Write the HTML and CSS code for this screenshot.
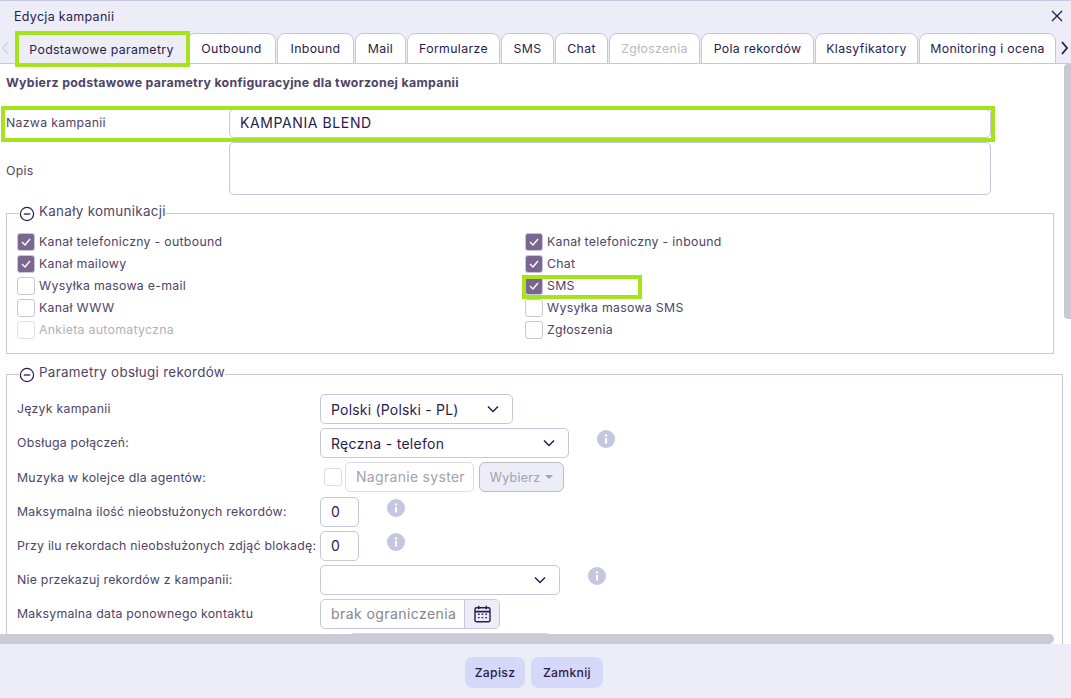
FILE: index.html
```html
<!DOCTYPE html>
<html lang="pl">
<head>
<meta charset="utf-8">
<title>Edycja kampanii</title>
<link rel="stylesheet" href="styles.css">
</head>
<body>
<div class="modal">
  <header class="modal-head">
    <span class="modal-title">Edycja kampanii</span>
    <svg class="close" width="12" height="12" viewBox="0 0 12 12"><path d="M1 1l10 10M11 1L1 11" fill="none" stroke="#2a1b4d" stroke-width="1.3"/></svg>
  </header>
  <nav class="tabbar">
    <svg class="tab-arrow" width="9" height="14" viewBox="0 0 9 14"><path d="M7 1L2 7l5 6" fill="none" stroke="#d3d3dc" stroke-width="1.5"/></svg>
    <div class="tabs">
      <div class="tab tab-active">Podstawowe parametry</div>
      <div class="tab">Outbound</div>
      <div class="tab">Inbound</div>
      <div class="tab">Mail</div>
      <div class="tab">Formularze</div>
      <div class="tab">SMS</div>
      <div class="tab">Chat</div>
      <div class="tab tab-disabled">Zgłoszenia</div>
      <div class="tab">Pola rekordów</div>
      <div class="tab">Klasyfikatory</div>
      <div class="tab">Monitoring i ocena</div>
    </div>
    <svg class="tab-arrow tab-arrow-next" width="9" height="14" viewBox="0 0 9 14"><path d="M2 1l5 6-5 6" fill="none" stroke="#2a1b4d" stroke-width="1.8"/></svg>
  </nav>
  <main class="content">
    <h1 class="intro">Wybierz podstawowe parametry konfiguracyjne dla tworzonej kampanii</h1>
    <div class="name-row name-row-marked">
      <div class="name-label">Nazwa kampanii</div>
      <div class="field name-input">KAMPANIA BLEND</div>
    </div>
    <div class="name-row desc-row">
      <div class="name-label desc-label">Opis</div>
      <div class="field desc-input"></div>
    </div>

    <fieldset class="group group-channels">
      <legend class="legend">
        <svg width="16" height="16" viewBox="0 0 16 16"><circle cx="8" cy="8" r="6.6" fill="none" stroke="#2a1b4d" stroke-width="1.2"/><path d="M4.8 8h6.4" stroke="#2a1b4d" stroke-width="1.3"/></svg>
        <span class="legend-text">Kanały komunikacji</span>
      </legend>
      <div class="checks">
        <div class="check"><span class="box box-on"><svg width="12" height="10" viewBox="0 0 12 10"><path d="M2 5l3 3 5-6" fill="none" stroke="#fff" stroke-width="1.4"/></svg></span>Kanał telefoniczny - outbound</div>
        <div class="check"><span class="box box-on"><svg width="12" height="10" viewBox="0 0 12 10"><path d="M2 5l3 3 5-6" fill="none" stroke="#fff" stroke-width="1.4"/></svg></span>Kanał mailowy</div>
        <div class="check"><span class="box"></span>Wysyłka masowa e-mail</div>
        <div class="check"><span class="box"></span>Kanał WWW</div>
        <div class="check check-disabled"><span class="box"></span>Ankieta automatyczna</div>
        <div class="check"><span class="box box-on"><svg width="12" height="10" viewBox="0 0 12 10"><path d="M2 5l3 3 5-6" fill="none" stroke="#fff" stroke-width="1.4"/></svg></span>Kanał telefoniczny - inbound</div>
        <div class="check"><span class="box box-on"><svg width="12" height="10" viewBox="0 0 12 10"><path d="M2 5l3 3 5-6" fill="none" stroke="#fff" stroke-width="1.4"/></svg></span>Chat</div>
        <div class="check check-marked"><span class="box box-on"><svg width="12" height="10" viewBox="0 0 12 10"><path d="M2 5l3 3 5-6" fill="none" stroke="#fff" stroke-width="1.4"/></svg></span>SMS</div>
        <div class="check"><span class="box"></span>Wysyłka masowa SMS</div>
        <div class="check"><span class="box"></span>Zgłoszenia</div>
      </div>
    </fieldset>

    <fieldset class="group group-records">
      <legend class="legend">
        <svg width="16" height="16" viewBox="0 0 16 16"><circle cx="8" cy="8" r="6.6" fill="none" stroke="#2a1b4d" stroke-width="1.2"/><path d="M4.8 8h6.4" stroke="#2a1b4d" stroke-width="1.3"/></svg>
        <span class="legend-text">Parametry obsługi rekordów</span>
      </legend>
      <div class="form">
        <div class="form-label">Język kampanii</div>
        <div class="controls">
          <div class="field select select-lang">Polski (Polski - PL)<svg width="12" height="8" viewBox="0 0 12 8"><path d="M1 1.5l5 5 5-5" fill="none" stroke="#2a1b4d" stroke-width="1.5"/></svg></div>
        </div>
        <div class="form-label">Obsługa połączeń:</div>
        <div class="controls">
          <div class="field select select-calls">Ręczna - telefon<svg width="12" height="8" viewBox="0 0 12 8"><path d="M1 1.5l5 5 5-5" fill="none" stroke="#2a1b4d" stroke-width="1.5"/></svg></div>
          <svg class="info info-calls" width="18" height="18" viewBox="0 0 18 18"><circle cx="9" cy="9" r="9" fill="#c5c6e0"/><circle cx="9" cy="5.4" r="1.2" fill="#fff"/><path d="M9 8v5.5" stroke="#fff" stroke-width="2"/></svg>
        </div>
        <div class="form-label">Muzyka w kolejce dla agentów:</div>
        <div class="controls controls-music">
          <span class="box music-box"></span>
          <div class="field music-input">Nagranie syster</div>
          <div class="pick">Wybierz<span class="caret"></span></div>
        </div>
        <div class="form-label">Maksymalna ilość nieobsłużonych rekordów:</div>
        <div class="controls">
          <div class="field number">0</div>
          <svg class="info info-number" width="18" height="18" viewBox="0 0 18 18"><circle cx="9" cy="9" r="9" fill="#c5c6e0"/><circle cx="9" cy="5.4" r="1.2" fill="#fff"/><path d="M9 8v5.5" stroke="#fff" stroke-width="2"/></svg>
        </div>
        <div class="form-label">Przy ilu rekordach nieobsłużonych zdjąć blokadę:</div>
        <div class="controls">
          <div class="field number">0</div>
          <svg class="info info-number" width="18" height="18" viewBox="0 0 18 18"><circle cx="9" cy="9" r="9" fill="#c5c6e0"/><circle cx="9" cy="5.4" r="1.2" fill="#fff"/><path d="M9 8v5.5" stroke="#fff" stroke-width="2"/></svg>
        </div>
        <div class="form-label">Nie przekazuj rekordów z kampanii:</div>
        <div class="controls">
          <div class="field select select-skip"><svg width="12" height="8" viewBox="0 0 12 8"><path d="M1 1.5l5 5 5-5" fill="none" stroke="#2a1b4d" stroke-width="1.5"/></svg></div>
          <svg class="info info-skip" width="18" height="18" viewBox="0 0 18 18"><circle cx="9" cy="9" r="9" fill="#c5c6e0"/><circle cx="9" cy="5.4" r="1.2" fill="#fff"/><path d="M9 8v5.5" stroke="#fff" stroke-width="2"/></svg>
        </div>
        <div class="form-label">Maksymalna data ponownego kontaktu</div>
        <div class="controls">
          <div class="date">
            <div class="date-text">brak ograniczenia</div>
            <div class="date-btn">
              <svg width="17" height="18" viewBox="0 0 17 18"><rect x="1" y="2.8" width="15" height="14" rx="1.6" fill="none" stroke="#2a1b4d" stroke-width="1.4"/><path d="M1 6.6h15" stroke="#2a1b4d" stroke-width="1.6"/><path d="M4.7 .8v3.4M12.3 .8v3.4" stroke="#2a1b4d" stroke-width="1.4"/><path d="M4 9.3h1.6M7.7 9.3h1.6M11.4 9.3H13M4 12.6h1.6M7.7 12.6h1.6M11.4 12.6H13" stroke="#2a1b4d" stroke-width="1.4"/></svg>
            </div>
          </div>
        </div>
        <div class="form-label"></div>
        <div class="controls"><div class="peek"></div></div>
      </div>
    </fieldset>
    <div class="scroll-v"></div>
    <div class="scroll-h"></div>
  </main>
  <footer class="modal-foot">
    <div class="btn btn-save">Zapisz</div>
    <div class="btn btn-close">Zamknij</div>
  </footer>
</div>
</body>
</html>
```
FILE: styles.css
```css
* { box-sizing: border-box; }
html, body { margin: 0; height: 100%; overflow: hidden; }
body {
  font-family: Inter, "Noto Sans", "Liberation Sans", sans-serif;
  font-size: 12.3px;
  letter-spacing: .3px;
  color: #4e4468;
  background: #fff;
}
.modal {
  display: flex;
  flex-direction: column;
  height: 698px;
  width: 1071px;
  background: #ecedf6;
  border-top: 1px solid #c5c6e0;
}
.modal-head {
  display: flex;
  justify-content: space-between;
  align-items: center;
  height: 31px;
  padding: 0 8px 1px 14px;
  flex: none;
}
.modal-title { font-size: 12.5px; color: #2a1b4d; }
.tabbar {
  display: flex;
  align-items: flex-end;
  height: 32px;
  flex: none;
  position: relative;
  background: #ecedf6;
  border-bottom: 1px solid #c5c6e0;
}
.tab-arrow { position: absolute; left: 1px; top: 9px; }
.tab-arrow-next { left: auto; right: 2px; }
.tabs {
  display: grid;
  grid-template-columns: 168px 90px 78px 52px 94px 54px 54px 92px 114px 104px 138px;
  margin: 0 0 -1px 19px;
  height: 31px;
}
.tab {
  display: flex;
  align-items: center;
  justify-content: center;
  background: #fff;
  border: 1px solid #c5c6e0;
  border-radius: 8px 8px 0 0;
  font-size: 12.3px;
  letter-spacing: .35px;
  color: #2a1b4d;
  margin-right: 1px;
  white-space: nowrap;
}
.tab-active {
  background: #ecedf6;
  border: 0;
  border-radius: 0;
  margin: 2px 1px 1px 0;
  padding-right: 2px;
  outline: 4px solid #a5e41d;
  position: relative;
  z-index: 2;
}
.tab-disabled { color: #b9b9c4; }
.content {
  position: relative;
  flex: 1;
  min-height: 0;
  overflow: hidden;
  background: #fff;
  padding: 11px 0 0 6px;
}
.intro {
  margin: 0 0 19px;
  font-size: 12.35px;
  line-height: 16px;
  font-weight: 700;
  color: #4e4468;
  letter-spacing: .3px;
}
.name-row {
  display: flex;
  align-items: center;
  width: 986px;
  margin-left: -1px;
}
.name-row-marked {
  height: 28px;
  outline: 4px solid #a5e41d;
}
.name-label { width: 224px; flex: none; padding: 0 0 3px 1px; }
.desc-label { padding: 3px 0 0 1px; }
.field {
  background: #fff;
  border: 1px solid #c5c6e0;
  border-radius: 5px;
  color: #2a1b4d;
  font-size: 14px;
}
.name-input {
  width: 762px;
  height: 29px;
  margin-top: -1px;
  line-height: 26px;
  padding-left: 10px;
  letter-spacing: .6px;
}
.desc-row { margin-top: 4px; }
.desc-input { width: 762px; height: 53px; }
.group {
  margin: 9px 0 0;
  padding: 0 10px;
  border: 1px solid #c5c6e0;
  min-width: 0;
}
.group-channels { width: 1048px; padding-bottom: 14px; }
.group-records { width: 1057px; margin-top: 11px; padding-bottom: 40px; }
.legend {
  display: flex;
  align-items: flex-start;
  gap: 4px;
  height: 18px;
  padding: 0;
  margin-left: 2px;
  background: #fff;
}
.legend svg { margin-top: 2px; }
.legend-text {
  margin-top: -1px;
  font-size: 13.4px;
  line-height: 16px;
  letter-spacing: .3px;
  color: #4e4468;
}
.checks {
  display: grid;
  grid-template-columns: 508px 1fr;
  grid-template-rows: repeat(5, 18px);
  grid-auto-flow: column;
  row-gap: 4px;
  margin-top: 11px;
}
.check {
  display: flex;
  align-items: flex-start;
  gap: 4px;
  line-height: 17px;
  white-space: nowrap;
}
.check-disabled { color: #b2b0bc; }
.check-disabled .box { border-color: #e0e0ea; }
.check-marked {
  width: 112px;
  height: 16px;
  margin: 2px 0 0 1px;
  line-height: 14px;
  outline: 4px solid #a5e41d;
}
.check-marked .box { margin: -2px 0 0 -1px; }
.box {
  display: flex;
  align-items: center;
  justify-content: center;
  flex: none;
  width: 18px;
  height: 18px;
  border: 1px solid #c5c6e0;
  border-radius: 3px;
  background: #fff;
}
.box-on { background: #7a6691; }
.form {
  display: grid;
  grid-template-columns: 303px 1fr;
  grid-template-rows: 30px 30px 31px 30px 30px 30px 30px 30px;
  row-gap: 4px;
  margin-top: 11px;
  align-items: center;
}
.form-label { white-space: nowrap; font-size: 12.3px; letter-spacing: .25px; padding-bottom: 1px; }
.controls { display: flex; align-items: center; }
.controls-music { align-self: start; }
.select {
  display: flex;
  align-items: center;
  justify-content: space-between;
  height: 30px;
  padding: 0 13px 0 10px;
}
.select-lang { width: 193px; letter-spacing: .2px; }
.select-calls { width: 249px; }
.select-skip { width: 240px; justify-content: flex-end; }
.info { flex: none; margin-top: -8px; }
.info-calls, .info-number, .info-skip { margin-left: 28px; }
.music-box { margin-left: 4px; border-color: #dcdce8; }
.music-input {
  width: 129px;
  height: 30px;
  line-height: 28px;
  margin-left: 3px;
  padding-left: 10px;
  color: #a3a2ae;
  border-color: #dcdce8;
  white-space: nowrap;
  overflow: hidden;
}
.pick {
  display: flex;
  align-items: center;
  justify-content: center;
  gap: 5px;
  width: 85px;
  height: 30px;
  margin-left: 5px;
  background: #ecedf6;
  border: 1px solid #bcbcc8;
  border-radius: 6px;
  color: #a3a2ae;
  font-size: 12.4px;
}
.caret {
  width: 0;
  height: 0;
  border: 4px solid transparent;
  border-top: 4px solid #a3a2ae;
  border-bottom: 0;
}
.number {
  width: 39px;
  height: 30px;
  line-height: 28px;
  padding-left: 10px;
  letter-spacing: .8px;
}
.date {
  display: flex;
  width: 180px;
  height: 30px;
  border: 1px solid #c5c6e0;
  border-radius: 5px;
  overflow: hidden;
}
.date-text {
  flex: 1;
  line-height: 28px;
  padding-left: 10px;
  font-size: 14px;
  letter-spacing: .42px;
  color: #868592;
  white-space: nowrap;
}
.date-btn {
  display: flex;
  align-items: center;
  justify-content: center;
  width: 35px;
  background: #ecedf6;
  border-left: 1px solid #c5c6e0;
}
.peek {
  width: 204px;
  height: 30px;
  margin-left: 28px;
  border: 1px solid #d6d6e0;
  border-radius: 6px;
  background: #ecedf6;
}
.scroll-v {
  position: absolute;
  right: 0;
  top: 0;
  width: 7px;
  height: 255px;
  background: #c9c9d6;
  border-radius: 4px 0 0 4px;
}
.scroll-h {
  position: absolute;
  left: 0;
  bottom: 0;
  width: 1054px;
  height: 10px;
  background: #cbcbd8;
  border-radius: 0 5px 5px 0;
}
.modal-foot {
  display: flex;
  justify-content: center;
  gap: 6px;
  flex: none;
  height: 54px;
  padding: 13px 3px 0 0;
  background: #ecedf6;
}
.btn {
  display: flex;
  align-items: center;
  justify-content: center;
  height: 31px;
  border-radius: 8px;
  background: #d5d8f8;
  color: #2a1b4d;
  font-size: 12.2px;
  font-weight: 500;
}
.btn-save { width: 60px; }
.btn-close { width: 72px; }
```
